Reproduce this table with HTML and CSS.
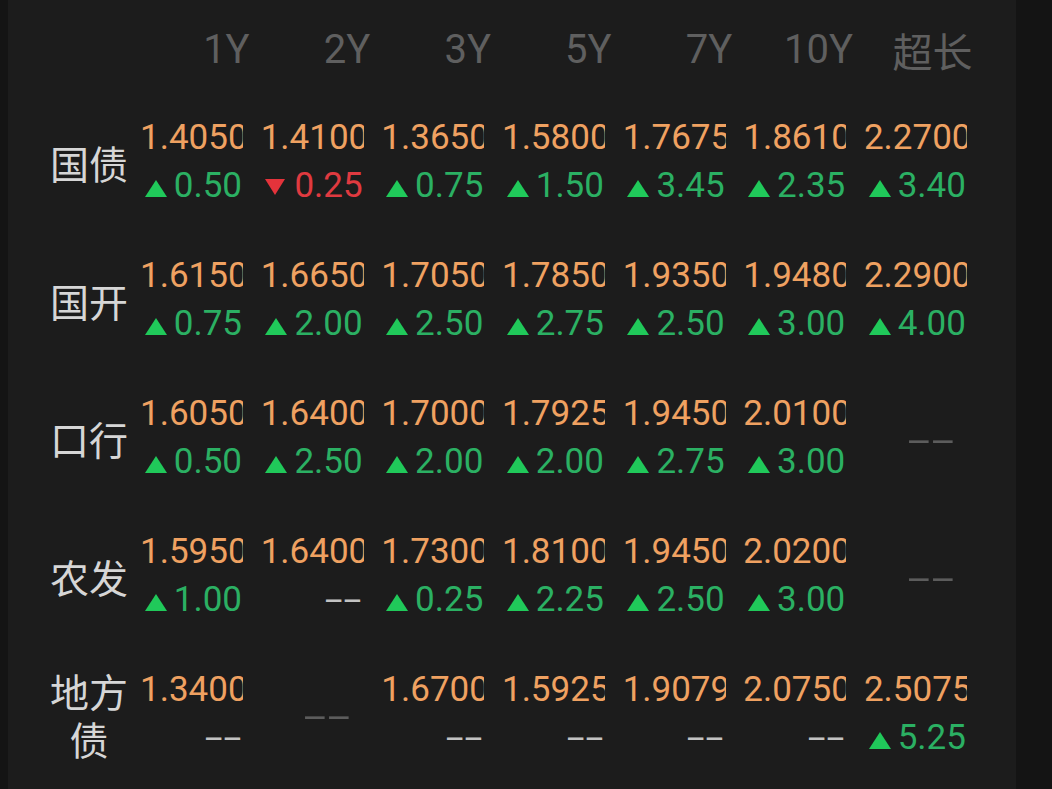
FILE: index.html
```html
<!DOCTYPE html>
<html lang="zh-CN">
<head>
<meta charset="utf-8">
<title>债券收益率</title>
<link rel="stylesheet" href="styles.css">
</head>
<body>
<div class="screen">
  <div class="edge"></div>
  <main class="board">
    <div class="grid head">
      <div class="corner"></div>
      <div class="hcell">1Y</div>
      <div class="hcell">2Y</div>
      <div class="hcell">3Y</div>
      <div class="hcell">5Y</div>
      <div class="hcell">7Y</div>
      <div class="hcell">10Y</div>
      <div class="hcell cjk">超长</div>
    </div>

    <div class="grid row">
      <div class="label">国债</div>
      <div class="cell"><div class="val">1.4050</div><div class="chg up"><i class="tri"></i>0.50</div></div>
      <div class="cell"><div class="val">1.4100</div><div class="chg down"><i class="tri"></i>0.25</div></div>
      <div class="cell"><div class="val">1.3650</div><div class="chg up"><i class="tri"></i>0.75</div></div>
      <div class="cell"><div class="val">1.5800</div><div class="chg up"><i class="tri"></i>1.50</div></div>
      <div class="cell"><div class="val">1.7675</div><div class="chg up"><i class="tri"></i>3.45</div></div>
      <div class="cell"><div class="val">1.8610</div><div class="chg up"><i class="tri"></i>2.35</div></div>
      <div class="cell"><div class="val">2.2700</div><div class="chg up"><i class="tri"></i>3.40</div></div>
    </div>

    <div class="grid row">
      <div class="label">国开</div>
      <div class="cell"><div class="val">1.6150</div><div class="chg up"><i class="tri"></i>0.75</div></div>
      <div class="cell"><div class="val">1.6650</div><div class="chg up"><i class="tri"></i>2.00</div></div>
      <div class="cell"><div class="val">1.7050</div><div class="chg up"><i class="tri"></i>2.50</div></div>
      <div class="cell"><div class="val">1.7850</div><div class="chg up"><i class="tri"></i>2.75</div></div>
      <div class="cell"><div class="val">1.9350</div><div class="chg up"><i class="tri"></i>2.50</div></div>
      <div class="cell"><div class="val">1.9480</div><div class="chg up"><i class="tri"></i>3.00</div></div>
      <div class="cell"><div class="val">2.2900</div><div class="chg up"><i class="tri"></i>4.00</div></div>
    </div>

    <div class="grid row">
      <div class="label">口行</div>
      <div class="cell"><div class="val">1.6050</div><div class="chg up"><i class="tri"></i>0.50</div></div>
      <div class="cell"><div class="val">1.6400</div><div class="chg up"><i class="tri"></i>2.50</div></div>
      <div class="cell"><div class="val">1.7000</div><div class="chg up"><i class="tri"></i>2.00</div></div>
      <div class="cell"><div class="val">1.7925</div><div class="chg up"><i class="tri"></i>2.00</div></div>
      <div class="cell"><div class="val">1.9450</div><div class="chg up"><i class="tri"></i>2.75</div></div>
      <div class="cell"><div class="val">2.0100</div><div class="chg up"><i class="tri"></i>3.00</div></div>
      <div class="cell empty"><span class="dash big">--</span></div>
    </div>

    <div class="grid row">
      <div class="label">农发</div>
      <div class="cell"><div class="val">1.5950</div><div class="chg up"><i class="tri"></i>1.00</div></div>
      <div class="cell"><div class="val">1.6400</div><div class="chg none"><span class="dash">--</span></div></div>
      <div class="cell"><div class="val">1.7300</div><div class="chg up"><i class="tri"></i>0.25</div></div>
      <div class="cell"><div class="val">1.8100</div><div class="chg up"><i class="tri"></i>2.25</div></div>
      <div class="cell"><div class="val">1.9450</div><div class="chg up"><i class="tri"></i>2.50</div></div>
      <div class="cell"><div class="val">2.0200</div><div class="chg up"><i class="tri"></i>3.00</div></div>
      <div class="cell empty"><span class="dash big">--</span></div>
    </div>

    <div class="grid row">
      <div class="label">地方债</div>
      <div class="cell"><div class="val">1.3400</div><div class="chg none"><span class="dash">--</span></div></div>
      <div class="cell empty"><span class="dash big">--</span></div>
      <div class="cell"><div class="val">1.6700</div><div class="chg none"><span class="dash">--</span></div></div>
      <div class="cell"><div class="val">1.5925</div><div class="chg none"><span class="dash">--</span></div></div>
      <div class="cell"><div class="val">1.9079</div><div class="chg none"><span class="dash">--</span></div></div>
      <div class="cell"><div class="val">2.0750</div><div class="chg none"><span class="dash">--</span></div></div>
      <div class="cell"><div class="val">2.5075</div><div class="chg up"><i class="tri"></i>5.25</div></div>
    </div>
  </main>
  <div class="side"></div>
</div>
</body>
</html>
```

FILE: styles.css
```css
* { box-sizing: border-box; }

html, body {
  margin: 0;
  padding: 0;
  background: #141414;
}

.screen {
  display: flex;
  width: 1052px;
  height: 789px;
  overflow: hidden;
  font-family: Roboto, "Noto Sans CJK SC", sans-serif;
}

.edge {
  width: 8px;
  flex: none;
  background: #141414;
}

.board {
  width: 1008px;
  flex: none;
  background: #1c1c1c;
  padding: 26px 0 0 41px;
}

.side {
  flex: 1;
  background: #141414;
}

.grid {
  display: grid;
  grid-template-columns: 91px repeat(7, 120.67px);
}

.head {
  height: 48px;
  margin-bottom: 40px;
}

.hcell {
  font-size: 40px;
  line-height: 48px;
  color: #5f5f5f;
  text-align: right;
  padding-right: 11px;
  white-space: nowrap;
}

.hcell.cjk {
  font-family: "Noto Sans CJK SC", sans-serif;
  padding-right: 12px;
}

.row {
  height: 96px;
  margin-bottom: 42px;
}

.label {
  font-family: "Noto Sans CJK SC", sans-serif;
  font-size: 39px;
  line-height: 48px;
  color: #d6d6d6;
  width: 80px;
  text-align: center;
  align-self: center;
}

.cell {
  padding-right: 17.67px;
}

.val,
.chg {
  width: 103px;
  height: 48px;
  font-size: 35px;
  line-height: 48px;
  white-space: nowrap;
  overflow: hidden;
}

.val {
  color: #efa161;
}

.chg {
  text-align: right;
  padding-right: 1px;
}

.chg.up { color: #2bb063; }
.chg.down { color: #e03a40; }

.tri {
  display: inline-block;
  width: 0;
  height: 0;
  border-left: 11.5px solid transparent;
  border-right: 11.5px solid transparent;
  margin-right: 7px;
}

.up .tri {
  border-bottom: 17px solid #20c95a;
}

.down .tri {
  border-left-width: 10.5px;
  border-right-width: 10.5px;
  border-top: 16px solid #e4333b;
  vertical-align: 2px;
  margin-right: 9px;
}

.dash {
  display: inline-block;
  color: #c2c2c2;
  transform: scaleX(1.85);
  transform-origin: right center;
  letter-spacing: 0.5px;
}

.cell.empty {
  display: flex;
  align-items: center;
  justify-content: flex-end;
  padding-right: 29.67px;
  padding-top: 6px;
}

.dash.big {
  font-size: 35px;
  line-height: 40px;
  color: #5c5c5c;
  transform: scaleX(2.35);
}
```
